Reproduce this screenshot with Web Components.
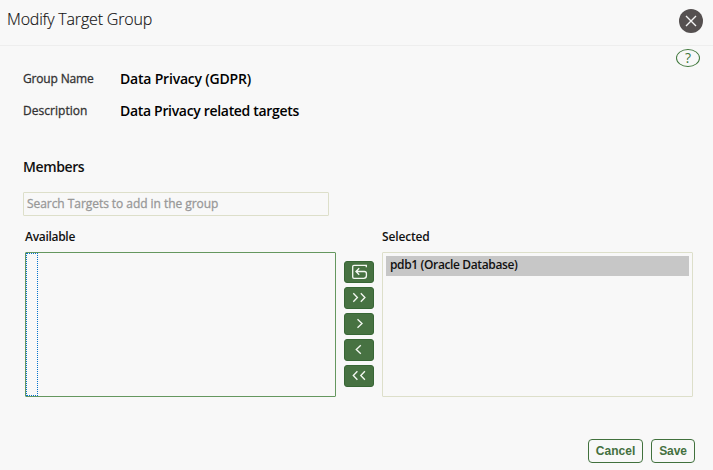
<!DOCTYPE html>
<html lang="en"><head><meta charset="utf-8"><title>Modify Target Group</title>
<style>html,body{margin:0;background:#f8f8f8}body{height:470px;overflow:hidden;font-family:"Open Sans","Noto Sans",sans-serif}</style></head>
<body><target-dialog></target-dialog>
<script>
const define=(name,html,ready)=>customElements.define(name,class extends HTMLElement{
 connectedCallback(){
  if(this.shadowRoot)return;
  const t=document.createElement('template');t.innerHTML=html;
  this.attachShadow({mode:'open'}).append(t.content.cloneNode(true));
  if(ready)ready(this,this.shadowRoot);
 }});

/* One line of text, tracked so that it fills the width given in "w". */
define('ui-text',`<style>:host{display:block;white-space:nowrap}span{display:inline-block}</style><span></span>`,(h,r)=>{
 const s=r.querySelector('span');s.textContent=h.getAttribute('text');
 const w=+h.getAttribute('w');
 s.style.letterSpacing=(w-s.getBoundingClientRect().width)/s.textContent.length+'px';
});

define('icon-button',`<style>
:host{display:block;width:30px;height:22px;box-sizing:border-box;background:#477242;border:1px solid #376635;border-radius:3px}
svg{display:block;width:28px;height:20px;fill:none;stroke:#f4f8f2;stroke-width:1.35}</style><svg viewBox="0 0 28 20"><path/></svg>`,(h,r)=>{
 r.querySelector('path').setAttribute('d',{
 reset:'M21.3 5.2V3.3H9Q7.7 3.3 7.7 4.6V15Q7.7 16.3 9 16.3H18.8Q21.4 16.3 21.4 13.8V11.5Q21.4 9.5 19.4 9.5H11.2M14.2 6.3L11 9.5L14.2 12.7',
 addall:'M8.3 5.3L12.4 9.5L8.3 13.7M15.8 5.3L19.9 9.5L15.8 13.7',
 add:'M12.5 5.3L17 9.5L12.5 13.7',
 remove:'M15.8 5.3L11.3 9.5L15.8 13.7',
 removeall:'M12.4 5.3L8.3 9.5L12.4 13.7M19.9 5.3L15.8 9.5L19.9 13.7'}[h.getAttribute('icon')]);
});

define('list-box',`<style>
:host{display:block;box-sizing:border-box;width:311px;height:145px;border:1px solid #dddfca;border-radius:1px;padding:3px}
:host([active]){border-color:#65975f;padding:0}
.focus{display:none;box-sizing:border-box;width:12px;height:143px;border:1px dotted #0572ce}
:host([active]) .focus{display:block}</style><div class="focus"></div><slot></slot>`);

define('list-option',`<style>:host{display:block;height:20px;background:#c7c7c7;padding-left:4px;font:600 12px/18px "Open Sans",sans-serif;color:#111}</style><slot></slot>`);

define('action-button',`<style>:host{display:flex;justify-content:center;box-sizing:border-box;height:24px;border:1px solid #41713d;border-radius:4px;font:bold 12px/22px "Liberation Sans",sans-serif;color:#44703f;cursor:pointer}</style><slot></slot>`);

define('dialog-header',`<style>
:host{display:flex;justify-content:space-between;box-sizing:border-box;height:46px;padding:8px 10px 0 7px;border-bottom:1px solid #eeeeee;font:300 16px/22px "Open Sans",sans-serif;color:#111;-webkit-text-stroke:.15px #111}
svg{display:block;margin-top:1px}</style>
<ui-text text="Modify Target Group" w="145"></ui-text>
<svg width="24" height="24" viewBox="0 0 24 24"><circle cx="12" cy="12" r="12" fill="#555050"/><path d="M7 7L17 17M17 7L7 17" stroke="#f4f4f4" stroke-width="1.4"/></svg>`);

define('help-button',`<style>:host{display:flex;justify-content:center;box-sizing:border-box;width:24px;height:18px;border:1px solid #3f773b;border-radius:50%;color:#3f773b;font:400 14px/16px "Open Sans",sans-serif}</style>?`);

define('target-dialog',`<style>
:host{display:flex;flex-direction:column;height:470px;background:#f8f8f8}
.help{display:flex;justify-content:flex-end;padding:3px 13px 0 0}
.details{display:grid;grid-template-columns:97px auto;grid-auto-rows:32px;line-height:20px;margin:2px 0 0 23px}
.l{font-size:12px;color:#333;-webkit-text-stroke:.3px #333}.v{font-size:14px;font-weight:600;color:#000}
.members{height:20px;margin:24px 0 0 23px;font:600 14px/20px "Open Sans",sans-serif;color:#111}
.search{box-sizing:border-box;width:306px;height:24px;margin:15px 0 0 23px;padding-left:3px;border:1px solid #dddfca;border-radius:1px;font-size:12px;line-height:21px;color:#989898;-webkit-text-stroke:.3px #989898}
.shuttle{display:grid;grid-template-columns:311px 30px 311px;column-gap:8px;margin:12px 0 0 25px}
.name{height:24px;font-size:12px;font-weight:600;line-height:18px;color:#111}
.moves{display:grid;row-gap:4px;padding-top:33px;align-content:start}
footer{display:flex;gap:8px;justify-content:flex-end;margin:42px 18px 0 0}
</style>
<dialog-header></dialog-header>
<div class="help"><help-button></help-button></div>
<div class="details">
<ui-text class="l" text="Group Name" w="70.5"></ui-text><ui-text class="v" text="Data Privacy (GDPR)" w="131"></ui-text>
<ui-text class="l" text="Description" w="64.5"></ui-text><ui-text class="v" text="Data Privacy related targets" w="179"></ui-text></div>
<ui-text class="members" text="Members" w="61.2"></ui-text>
<div class="search"><ui-text text="Search Targets to add in the group" w="191.3"></ui-text></div>
<div class="shuttle">
<div><ui-text class="name" text="Available" w="50"></ui-text><list-box active></list-box></div>
<div class="moves"><icon-button icon="reset"></icon-button><icon-button icon="addall"></icon-button><icon-button icon="add"></icon-button><icon-button icon="remove"></icon-button><icon-button icon="removeall"></icon-button></div>
<div><ui-text class="name" text="Selected" w="47.6"></ui-text><list-box><list-option><ui-text text="pdb1 (Oracle Database)" w="127.5"></ui-text></list-option></list-box></div>
</div>
<footer><action-button style="width:55px"><ui-text text="Cancel" w="39.5"></ui-text></action-button><action-button style="width:44px"><ui-text text="Save" w="27.5"></ui-text></action-button></footer>`);
</script></body></html>
